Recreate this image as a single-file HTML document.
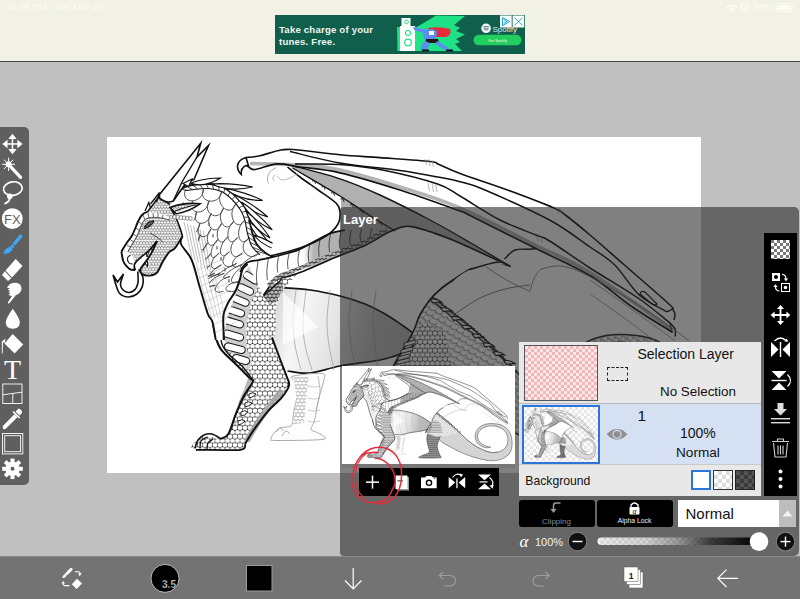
<!DOCTYPE html>
<html><head><meta charset="utf-8">
<style>
*{margin:0;padding:0;box-sizing:border-box}
html,body{width:800px;height:599px;overflow:hidden;background:#c0c0c0;font-family:"Liberation Sans",sans-serif}
.abs{position:absolute}
#top{left:0;top:0;width:800px;height:61px;background:#f2f1e6}
#topline{left:0;top:61px;width:800px;height:1px;background:#454545}
#canvas{left:107px;top:137px;width:594px;height:336px;background:#fff;overflow:hidden}
#ltb{left:0;top:127px;width:29px;height:358px;background:#5f5f5f;border-radius:0 5px 5px 0}
#panel{left:340px;top:207px;width:459px;height:349px;background:rgba(36,36,36,0.58);border-radius:4px 5px 5px 4px}
#btb{left:0;top:556px;width:800px;height:43px;background:#737373}
.st{color:#fdfdf8;font-size:11px;top:3px;letter-spacing:0.2px}
#ad{left:275px;top:15px;width:250px;height:39px;background:#0f5f4c;overflow:hidden}
#adtxt{left:4px;top:9.3px;color:#f3f6f2;font-weight:bold;font-size:9.6px;line-height:11.4px;letter-spacing:0.2px}
#layertitle{left:343px;top:212px;color:#fff;font-weight:bold;font-size:13px}
#thumb{left:342px;top:366px;width:173px;height:98px;background:#fff;overflow:hidden}
#thumbstrip{left:342px;top:464px;width:173px;height:4px;background:#777}
#ttb{left:358.5px;top:468px;width:140.5px;height:27.5px;background:#000}
#llist{left:519px;top:342px;width:242px;height:154px;background:#e8e8e8}
#rtb{left:764px;top:233px;width:33px;height:263px;background:#000}
.t{color:#111;white-space:nowrap}
</style></head>
<body>
<div id="top" class="abs"></div>
<div id="topline" class="abs"></div>
<svg class="abs" style="left:0;top:0" width="800" height="20">
  <g fill="#fcfcf6" stroke="none">
    <text x="5.2" y="10" font-family="Liberation Sans" font-size="9.3" fill="#fcfcf6" textLength="41.3" lengthAdjust="spacingAndGlyphs">12:29 PM</text>
    <text x="55.5" y="10" font-family="Liberation Sans" font-size="9.3" fill="#fcfcf6" textLength="48" lengthAdjust="spacingAndGlyphs">Sat Mar 28</text>
    <text x="753.8" y="10.2" font-family="Liberation Sans" font-size="9.3" fill="#fcfcf6" textLength="19.3" lengthAdjust="spacingAndGlyphs">90%</text>
    <path d="M726 7.2 A 8 8 0 0 1 737.6 7.2 L736.3 8.6 A 6 6 0 0 0 727.3 8.6Z"/>
    <path d="M728.3 9.5 A 5 5 0 0 1 735.3 9.5 L734 10.9 A 3 3 0 0 0 729.6 10.9Z"/>
    <path d="M730.5 11.8 A 2 2 0 0 1 733.1 11.8 L731.8 13.3Z"/>
    <circle cx="745" cy="7.5" r="4" fill="none" stroke="#fcfcf6" stroke-width="1.6"/>
    <path d="M743 7.5 L747.5 5.5 L745.5 10Z"/>
    <rect x="776" y="3.5" width="16" height="8" rx="2" fill="none" stroke="#fcfcf6" stroke-width="0.8"/>
    <rect x="777.5" y="5" width="13" height="5" rx="1"/>
    <rect x="792.5" y="6" width="1" height="3"/>
  </g>
</svg>
<div id="ad" class="abs">
  <div id="adtxt" class="abs">Take charge of your<br>tunes. Free.</div>
  <svg class="abs" style="left:0;top:0" width="250" height="39" viewBox="275 15 250 39">
    <path d="M397 27 L417 27 L436 15.5 L465 16 L454 25 L460 28 L456 31 L465 34.5 L456 39 L460 42 L455 44 L462 51 L397.5 51Z" fill="#1ee285"/>
    <rect x="401.5" y="18" width="9" height="9" fill="#fff"/>
    <rect x="400" y="26" width="15" height="25" fill="#fff"/>
    <circle cx="406.5" cy="22" r="1.8" fill="none" stroke="#1ee285" stroke-width="1"/>
    <circle cx="408" cy="33" r="2.5" fill="none" stroke="#1ee285" stroke-width="1.1"/>
    <circle cx="408" cy="42.5" r="3.3" fill="none" stroke="#1ee285" stroke-width="1.2"/>
    <path d="M428 28 Q440 26 450 29 Q452 35 446 37 L432 37Z" fill="#e8293a"/>
    <path d="M413 27 L425 29.5 L432 29 L437 31 L436 39 L424 39 L423 33 L414 30Z" fill="#5b8ef0"/>
    <rect x="429" y="31" width="5" height="4" fill="#fff"/>
    <path d="M426 39 L438 39 L439 43 L425 43Z" fill="#1a1a1a"/>
    <path d="M425 41 L430 43 L427 50 L421 50 Q420 45 425 41Z" fill="#5b8ef0"/>
    <path d="M437 41 L446 46 L451 50 L445 50 L435 44Z" fill="#5b8ef0"/>
    <rect x="422" y="49.5" width="7" height="1.8" fill="#111"/>
    <rect x="446" y="49.5" width="7" height="1.8" fill="#111"/>
    <circle cx="486.1" cy="28.3" r="4.8" fill="#f4f4f4"/>
    <path d="M483.3 26.8 Q486.3 25.8 489 27 M483.6 28.4 Q486.3 27.6 488.6 28.6 M484 29.9 Q486.2 29.3 488.1 30.1" stroke="#0f5f4c" stroke-width="0.7" fill="none"/>
    <text x="492.5" y="31.5" font-family="Liberation Sans" font-size="8" fill="#e6e6e6">Spotify</text>
    <rect x="473.5" y="34.8" width="48" height="10.5" rx="5.25" fill="#22cf5e"/>
    <text x="497.5" y="42" font-family="Liberation Sans" font-size="3.8" fill="#e8f8ea" text-anchor="middle">Get Spotify</text>
    <rect x="500" y="15.5" width="11.7" height="12" fill="#fff"/>
    <path d="M502.5 17.5 L509.5 21.5 L502.5 25.8Z M503.8 19.6 L507 21.5 L503.8 23.5" fill="none" stroke="#1ba3d6" stroke-width="1"/>
    <rect x="512.6" y="15.5" width="11.6" height="12" fill="#fff"/>
    <path d="M514.5 17.7 L522.3 25.3 M522.3 17.7 L514.5 25.3" stroke="#1ba3d6" stroke-width="0.9"/>
  </svg>
</div>

<div id="canvas" class="abs"></div>
<svg class="abs" style="left:107px;top:137px" width="594" height="336" viewBox="107 137 594 336">
<defs>
<g id="dragon">
<defs>
 <pattern id="scl" width="3" height="2.7" patternUnits="userSpaceOnUse">
  <rect width="3" height="2.7" fill="#fff"/>
  <circle cx="1.5" cy="1.35" r="1.15" fill="none" stroke="#888" stroke-width="0.45"/>
 </pattern>
 <pattern id="sclB" width="5" height="8.6" patternUnits="userSpaceOnUse">
  <rect width="5" height="8.6" fill="#3c3c3c"/>
  <ellipse cx="2.5" cy="2.15" rx="2.4" ry="2.12" fill="#fff"/>
  <ellipse cx="0" cy="6.45" rx="2.4" ry="2.12" fill="#fff"/>
  <ellipse cx="5" cy="6.45" rx="2.4" ry="2.12" fill="#fff"/>
 </pattern>
 <pattern id="sclL" width="4" height="7" patternUnits="userSpaceOnUse">
  <rect width="4" height="7" fill="#bbb"/>
  <ellipse cx="2" cy="1.75" rx="1.7" ry="1.45" fill="#fff"/>
  <ellipse cx="0" cy="5.25" rx="1.7" ry="1.45" fill="#fff"/>
  <ellipse cx="4" cy="5.25" rx="1.7" ry="1.45" fill="#fff"/>
 </pattern>
 <pattern id="sclD" width="4" height="7" patternUnits="userSpaceOnUse">
  <rect width="4" height="7" fill="#3a3a3a"/>
  <ellipse cx="2" cy="1.75" rx="1.75" ry="1.5" fill="#b8b8b8"/>
  <ellipse cx="0" cy="5.25" rx="1.75" ry="1.5" fill="#b8b8b8"/>
  <ellipse cx="4" cy="5.25" rx="1.75" ry="1.5" fill="#b8b8b8"/>
 </pattern>
 <pattern id="sclH" width="7" height="6" patternUnits="userSpaceOnUse" patternTransform="rotate(30)">
  <rect width="7" height="6" fill="#fff"/>
  <path d="M0,3 Q3.5,7 7,3" fill="none" stroke="#555" stroke-width="0.8"/>
  <path d="M0,0 L0,6" stroke="#666" stroke-width="0.6"/>
 </pattern>
 <pattern id="sclHd" width="3" height="5.2" patternUnits="userSpaceOnUse">
  <rect width="3" height="5.2" fill="#7c7c7c"/>
  <ellipse cx="1.5" cy="1.3" rx="1.32" ry="1.18" fill="#fff"/>
  <ellipse cx="0" cy="3.9" rx="1.32" ry="1.18" fill="#fff"/>
  <ellipse cx="3" cy="3.9" rx="1.32" ry="1.18" fill="#fff"/>
 </pattern>
 <pattern id="sclT" width="5" height="5" patternUnits="userSpaceOnUse" patternTransform="rotate(35)">
  <rect width="5" height="5" fill="#f4f4f4"/>
  <path d="M0,2.5 Q2.5,5 5,2.5" fill="none" stroke="#555" stroke-width="0.7"/>
  <path d="M2.5,0 L2.5,5" stroke="#777" stroke-width="0.5"/>
 </pattern>
 <linearGradient id="humg" x1="253" y1="0" x2="405" y2="0" gradientUnits="userSpaceOnUse">
  <stop offset="0" stop-color="#fff"/><stop offset="0.33" stop-color="#fff"/><stop offset="0.4" stop-color="#b4b4b4"/><stop offset="1" stop-color="#a4a4a4"/>
 </linearGradient>
 <linearGradient id="belly" x1="272" y1="300" x2="420" y2="340" gradientUnits="userSpaceOnUse">
  <stop offset="0" stop-color="#d4d4d4"/><stop offset="0.2" stop-color="#f6f6f6"/><stop offset="0.45" stop-color="#e4e4e4"/><stop offset="0.7" stop-color="#bdbdbd"/><stop offset="1" stop-color="#b0b0b0"/>
 </linearGradient>
</defs>
<path d="M428.9,294.3 C437.4,301.0 464.2,320.8 479.7,334.5 C495.2,348.2 507.9,364.1 522.0,376.8 C536.1,389.5 549.5,401.5 564.3,410.7 C579.1,419.9 597.4,428.3 610.8,431.8 C624.2,435.3 634.7,434.6 644.6,431.8 C654.5,429.0 664.7,422.6 670.0,414.9 C675.3,407.1 677.1,394.5 676.4,385.3 C675.7,376.1 671.8,366.6 665.8,359.9 C659.8,353.2 649.6,347.9 640.4,345.1 C631.2,342.3 620.0,341.6 610.8,343.0 C601.6,344.4 591.8,348.7 585.4,353.6 C579.0,358.5 574.1,365.9 572.7,372.6 C571.3,379.3 573.5,387.7 577.0,393.7 C580.5,399.7 587.6,405.0 593.9,408.5 C600.2,412.0 611.5,413.8 615.0,414.9 L617.2,415.7 C614.0,415.9 605.5,419.2 598.1,417.0 C590.7,414.8 578.3,408.9 572.7,402.2 C567.1,395.5 564.3,384.9 564.3,376.8 C564.3,368.7 567.8,360.0 572.7,353.6 C577.6,347.2 585.4,341.9 593.9,338.7 C602.4,335.5 612.9,334.1 623.5,334.5 C634.1,334.9 647.4,336.0 657.3,340.9 C667.2,345.8 677.1,353.9 682.7,364.1 C688.4,374.3 691.2,390.2 691.2,402.2 C691.2,414.2 689.1,426.8 682.7,436.0 C676.4,445.2 665.1,453.0 653.1,457.2 C641.1,461.4 629.1,463.5 610.8,461.4 C592.5,459.3 565.0,452.2 543.1,444.5 C521.2,436.8 497.3,424.8 479.7,414.9 C462.1,405.0 448.0,400.8 437.4,385.3 C426.8,369.8 419.7,332.4 416.2,321.8Z" fill="url(#sclT)" stroke="#222" stroke-width="1.5" />
<path d="M428.9,294.3 C437.4,301.0 464.2,320.8 479.7,334.5 C495.2,348.2 507.9,364.1 522.0,376.8 C536.1,389.5 549.5,401.5 564.3,410.7 C579.1,419.9 597.4,428.3 610.8,431.8 C624.2,435.3 639.0,431.8 644.6,431.8" fill="none" stroke="#333" stroke-width="2.6" stroke-dasharray="1.5 2.5"/>
<path d="M418.0,330.0 C409.5,331.7 407.3,350.8 404.0,360.0 C400.7,369.2 398.3,376.7 398.0,385.0 C397.7,393.3 400.5,402.5 402.0,410.0 C403.5,417.5 407.7,425.3 407.0,430.0 C406.3,434.7 402.2,435.7 398.0,438.0 C393.8,440.3 386.0,441.7 382.0,444.0 C378.0,446.3 364.0,450.7 374.0,452.0 C384.0,453.3 430.3,453.3 442.0,452.0 C453.7,450.7 444.7,447.7 444.0,444.0 C443.3,440.3 439.7,435.7 438.0,430.0 C436.3,424.3 433.3,417.5 434.0,410.0 C434.7,402.5 438.5,395.0 442.0,385.0 C445.5,375.0 459.0,359.2 455.0,350.0 C451.0,340.8 426.5,328.3 418.0,330.0Z" fill="url(#sclD)" stroke="#222" stroke-width="1.5" />
<path d="M393.5,365.8 L412.8,332.5 L419.8,315.0 L430.2,299.2 L458.0,322.0 L487.0,345.0 L510.0,366.0 L470.0,375.0 L430.0,380.0Z" fill="url(#sclH)" stroke="none" stroke-width="0" />
<path d="M400.0,366.0 L413.0,332.0 L425.0,322.0 L445.0,333.0 L452.0,366.0Z" fill="url(#sclB)" stroke="none" stroke-width="0" />
<path d="M401.0,340.0 l12,-3 q2,1.5 0,3.5 l-12,3Z" fill="#eee" stroke="#222" stroke-width="0.9" />
<path d="M399.0,347.0 l12,-3 q2,1.5 0,3.5 l-12,3Z" fill="#eee" stroke="#222" stroke-width="0.9" />
<path d="M398.0,354.0 l12,-3 q2,1.5 0,3.5 l-12,3Z" fill="#eee" stroke="#222" stroke-width="0.9" />
<path d="M397.0,361.0 l12,-3 q2,1.5 0,3.5 l-12,3Z" fill="#eee" stroke="#222" stroke-width="0.9" />
<path d="M393.5,365.8 C396.7,360.2 408.4,341.0 412.8,332.5 C417.1,324.0 416.8,320.5 419.8,315.0 C422.7,309.5 426.8,303.6 430.2,299.2 C433.8,294.9 437.0,292.0 440.8,288.8 C444.5,285.5 448.5,283.1 453.0,280.0 C457.5,276.9 460.6,272.8 467.5,270.0 C474.4,267.2 487.4,263.9 494.5,263.2 C501.6,262.6 507.4,265.5 510.0,266.0" fill="none" stroke="#111" stroke-width="1.6" />
<path d="M430.2,299.2 L458.0,322.0 L487.8,345.0 L506.0,362.0" fill="none" stroke="#222" stroke-width="1.2" />
<path d="M430.2,299.2 Q436.2,297.8 441.8,302.1 Q436.2,301.8 432.8,302.8 Z" fill="#fff" stroke="#111" stroke-width="1.1" />
<path d="M440.8,308.1 Q446.8,306.6 452.2,310.9 Q446.8,310.6 443.2,311.6 Z" fill="#fff" stroke="#111" stroke-width="1.1" />
<path d="M451.2,316.9 Q457.2,315.4 462.8,319.7 Q457.2,319.4 453.8,320.4 Z" fill="#fff" stroke="#111" stroke-width="1.1" />
<path d="M461.8,325.6 Q467.8,324.1 473.2,328.4 Q467.8,328.1 464.2,329.1 Z" fill="#fff" stroke="#111" stroke-width="1.1" />
<path d="M472.2,334.4 Q478.2,332.9 483.8,337.2 Q478.2,336.9 474.8,337.9 Z" fill="#fff" stroke="#111" stroke-width="1.1" />
<path d="M482.8,343.2 Q488.8,341.8 494.2,346.1 Q488.8,345.8 485.2,346.8 Z" fill="#fff" stroke="#111" stroke-width="1.1" />
<path d="M493.2,352.1 Q499.2,350.6 504.8,354.9 Q499.2,354.6 495.8,355.6 Z" fill="#fff" stroke="#111" stroke-width="1.1" />
<path d="M503.8,360.9 Q509.8,359.4 515.2,363.7 Q509.8,363.4 506.2,364.4 Z" fill="#fff" stroke="#111" stroke-width="1.1" />
<path d="M456.5,313.0 C460.4,310.5 471.9,302.0 480.0,298.0 C488.1,294.0 496.7,291.2 505.0,289.0 C513.3,286.8 525.8,285.7 530.0,285.0" fill="none" stroke="#555" stroke-width="0.8" />
<path d="M270.0,254.0 L330.0,232.0 L398.6,227.0 L430.0,231.0 L509.0,264.0 L470.0,268.0 L452.6,279.0 L432.0,297.0 L420.0,315.0 L414.3,335.0 L385.0,312.6 L340.0,295.0 L280.0,287.5Z" fill="#fff" stroke="none" stroke-width="0" />
<path d="M280.0,287.5 C285.0,287.9 300.0,288.6 310.0,290.0 C320.0,291.4 330.8,293.7 340.0,296.0 C349.2,298.3 357.5,301.0 365.0,304.0 C372.5,307.0 378.8,310.5 385.0,314.0 C391.2,317.5 397.3,321.8 402.0,325.0 C406.7,328.2 411.2,331.7 413.0,333.0 L400.0,356.0 C398.3,356.3 395.0,357.2 390.0,358.0 C385.0,358.8 378.3,359.7 370.0,361.0 C361.7,362.3 350.0,364.0 340.0,366.0 C330.0,368.0 318.8,372.2 310.0,373.0 C301.2,373.8 291.2,371.3 287.5,371.0 C278,355 272,335 272.5,325 C272,310 275,295 280,287.5Z" fill="url(#belly)" stroke="none" stroke-width="0" />
<path d="M280.0,287.5 C285.0,287.9 300.0,288.6 310.0,290.0 C320.0,291.4 330.8,293.7 340.0,296.0 C349.2,298.3 357.5,301.0 365.0,304.0 C372.5,307.0 378.8,310.5 385.0,314.0 C391.2,317.5 397.3,321.8 402.0,325.0 C406.7,328.2 411.2,331.7 413.0,333.0" fill="none" stroke="#111" stroke-width="1.7" />
<path d="M287.5,371.0 C291.2,371.3 301.2,373.8 310.0,373.0 C318.8,372.2 328.3,368.2 340.0,366.0 C351.7,363.8 370.0,362.0 380.0,360.0 C390.0,358.0 394.3,356.5 400.0,354.0 C405.7,351.5 411.9,346.5 414.3,345.0" fill="none" stroke="#111" stroke-width="1.7" />
<path d="M393.5,365.8 C396.7,360.2 408.4,341.0 412.8,332.5 C417.1,324.0 416.8,320.5 419.8,315.0 C422.7,309.5 426.8,303.6 430.2,299.2 C433.8,294.9 437.0,292.0 440.8,288.8 C444.5,285.5 451.0,281.5 453.0,280.0" fill="none" stroke="#111" stroke-width="1.6" />
<path d="M404.0,343.0 l11,-3 q2,1.5 0,3.5 l-11,3Z" fill="#eee" stroke="#222" stroke-width="0.9" />
<path d="M401.0,350.0 l11,-3 q2,1.5 0,3.5 l-11,3Z" fill="#eee" stroke="#222" stroke-width="0.9" />
<path d="M398.0,357.0 l11,-3 q2,1.5 0,3.5 l-11,3Z" fill="#eee" stroke="#222" stroke-width="0.9" />
<path d="M296.0,290.0 C295.5,295.0 293.2,310.8 293.0,320.0 C292.8,329.2 293.7,336.7 295.0,345.0 C296.3,353.3 300.0,365.8 301.0,370.0" fill="none" stroke="#999" stroke-width="0.7" />
<path d="M306.0,290.0 C305.5,295.0 303.2,310.8 303.0,320.0 C302.8,329.2 303.5,336.7 305.0,345.0 C306.5,353.3 310.8,365.8 312.0,370.0" fill="none" stroke="#999" stroke-width="0.7" />
<path d="M330.0,290.0 C329.5,295.0 327.2,310.8 327.0,320.0 C326.8,329.2 327.8,336.7 329.0,345.0 C330.2,353.3 333.2,365.8 334.0,370.0" fill="none" stroke="#999" stroke-width="0.7" />
<path d="M352.0,290.0 C351.5,295.0 349.2,310.8 349.0,320.0 C348.8,329.2 349.8,336.7 351.0,345.0 C352.2,353.3 355.2,365.8 356.0,370.0" fill="none" stroke="#999" stroke-width="0.7" />
<path d="M376.0,290.0 C375.5,295.0 373.2,310.8 373.0,320.0 C372.8,329.2 374.2,336.7 375.0,345.0 C375.8,353.3 377.5,365.8 378.0,370.0" fill="none" stroke="#999" stroke-width="0.7" />
<path d="M283.0,292.0 L318.0,327.0 L283.0,345.0Z" fill="#fff" stroke="none" stroke-width="0" opacity="0.7"/>
<path d="M292.0,376.5 C288.0,378.2 297.2,380.2 298.0,384.0 C298.8,387.8 297.3,394.2 296.6,399.0 C295.9,403.8 294.4,408.3 293.6,412.6 C292.8,416.9 293.3,422.3 292.0,424.7 C290.7,427.1 288.0,426.4 286.0,427.0 C284.0,427.6 282.0,427.0 280.0,428.0 C278.0,429.0 275.5,431.2 274.0,433.0 C272.5,434.8 270.7,437.8 271.0,439.0 C271.3,440.2 267.5,440.4 276.0,440.5 C284.5,440.6 314.3,440.4 322.0,439.5 C329.7,438.6 323.0,436.2 322.0,435.0 C321.0,433.8 317.8,433.0 316.0,432.0 C314.2,431.0 311.2,431.0 311.0,429.0 C310.8,427.0 313.3,425.2 314.6,420.0 C315.9,414.8 317.5,404.1 319.0,397.6 C320.5,391.1 323.1,385.0 323.6,381.0 C324.1,377.0 327.3,374.2 322.0,373.5 C316.7,372.8 296.0,374.8 292.0,376.5Z" fill="#fdfdfd" stroke="#a0a0a0" stroke-width="0.9" />
<path d="M293.5,377.0 L308.6,377.0 L306.0,400.0 L304.0,423.0 L293.0,424.0 L296.6,399.0Z" fill="url(#sclL)" stroke="none" stroke-width="0" />
<path d="M308.0,386.0 C309.0,386.2 312.0,387.0 314.0,387.0 C316.0,387.0 319.0,386.2 320.0,386.0" fill="none" stroke="#bbb" stroke-width="0.8" />
<path d="M308.0,398.0 C309.0,398.2 312.0,399.0 314.0,399.0 C316.0,399.0 319.0,398.2 320.0,398.0" fill="none" stroke="#bbb" stroke-width="0.8" />
<path d="M308.0,410.0 C309.0,410.2 312.0,411.0 314.0,411.0 C316.0,411.0 319.0,410.2 320.0,410.0" fill="none" stroke="#bbb" stroke-width="0.8" />
<path d="M308.0,421.0 C309.0,421.2 312.0,422.0 314.0,422.0 C316.0,422.0 319.0,421.2 320.0,421.0" fill="none" stroke="#bbb" stroke-width="0.8" />
<path d="M318.0,376.0 C318.3,378.7 320.3,386.3 320.0,392.0 C319.7,397.7 316.7,407.0 316.0,410.0" fill="none" stroke="#aaa" stroke-width="0.8" />
<path d="M276.0,432.0 C276.7,431.3 278.7,428.2 280.0,428.0 C281.3,427.8 283.3,430.5 284.0,431.0" fill="none" stroke="#999" stroke-width="0.8" />
<path d="M282.0,436.0 C282.7,435.2 284.7,431.3 286.0,431.0 C287.3,430.7 289.3,433.5 290.0,434.0" fill="none" stroke="#999" stroke-width="0.8" />
<path d="M252.0,261.0 C241.7,264.2 245.0,265.5 243.0,268.5 C241.0,271.5 241.2,275.2 240.0,279.0 C238.8,282.8 237.5,287.0 235.5,291.0 C233.5,295.0 230.0,299.0 228.0,303.0 C226.0,307.0 224.2,310.5 223.5,315.0 C222.8,319.5 223.4,325.8 223.5,330.0 C223.6,334.2 223.4,336.7 223.8,340.0 C224.2,343.3 224.0,346.0 226.0,350.0 C228.0,354.0 231.6,359.2 235.6,363.9 C239.6,368.6 247.2,375.4 250.0,378.4 C252.8,381.4 253.8,378.8 252.6,382.0 C251.4,385.2 245.8,392.2 243.0,397.7 C240.2,403.1 238.0,408.6 235.6,414.7 C233.2,420.8 230.8,430.0 228.4,434.0 C226.0,438.0 224.9,438.6 221.0,438.9 C217.1,439.2 209.2,435.6 205.0,436.0 C200.8,436.4 197.8,438.7 196.0,441.0 C194.2,443.3 186.6,448.5 194.0,450.0 C201.4,451.5 231.9,450.9 240.5,449.8 C249.1,448.8 243.3,446.7 245.3,443.7 C247.3,440.7 249.0,436.8 252.6,431.6 C256.2,426.4 262.2,418.0 267.0,412.3 C271.8,406.6 277.9,402.1 281.6,397.7 C285.3,393.2 288.2,389.2 289.0,385.6 C289.8,382.0 288.0,380.4 286.5,376.0 C285.0,371.6 282.1,364.3 280.0,359.0 C277.9,353.7 274.7,349.7 274.0,344.0 C273.3,338.3 275.7,331.1 276.0,325.0 C276.3,318.9 274.7,313.4 276.0,307.5 C277.3,301.6 279.6,295.8 283.6,289.5 C287.6,283.2 296.4,276.7 300.0,270.0 C303.6,263.3 313.0,251.0 305.0,249.5 C297.0,248.0 262.3,257.8 252.0,261.0Z" fill="url(#sclB)" stroke="none" stroke-width="0" />
<path d="M263.0,296.0 L272.0,285.0 L282.0,281.0 L283.0,288.0 L277.0,300.0 L270.0,305.0Z" fill="url(#sclD)" stroke="none" stroke-width="0" />
<path d="M252.0,261.0 L243.0,268.5 L240.0,279.0 L235.5,291.0 L228.0,303.0 L223.5,315.0 L223.5,330.0 L226.0,345.0 L235.0,357.0 L248.0,370.0 L252.0,364.0 L247.0,350.0 L246.0,330.0 L248.0,315.0 L252.0,300.0 L258.0,285.0 L262.0,270.0Z" fill="#cfcfcf" stroke="none" stroke-width="0" />
<path d="M-5.0,-3.6 h10.0 a3.6,3.6 0 0 1 0,7.2 h-10.0 a3.6,3.6 0 0 1 0,-7.2Z" fill="#fff" stroke="#1a1a1a" stroke-width="1.05" transform="translate(251.0 277.8) rotate(32.0)"/>
<path d="M-5.1,-3.6 h10.1 a3.6,3.6 0 0 1 0,7.2 h-10.1 a3.6,3.6 0 0 1 0,-7.2Z" fill="#fff" stroke="#1a1a1a" stroke-width="1.05" transform="translate(245.5 289.5) rotate(24.8)"/>
<path d="M-5.7,-3.6 h11.5 a3.6,3.6 0 0 1 0,7.2 h-11.5 a3.6,3.6 0 0 1 0,-7.2Z" fill="#fff" stroke="#1a1a1a" stroke-width="1.05" transform="translate(240.2 300.5) rotate(22.5)"/>
<path d="M-5.8,-3.6 h11.6 a3.6,3.6 0 0 1 0,7.2 h-11.6 a3.6,3.6 0 0 1 0,-7.2Z" fill="#fff" stroke="#1a1a1a" stroke-width="1.05" transform="translate(235.5 311.5) rotate(18.4)"/>
<path d="M-6.8,-3.6 h13.5 a3.6,3.6 0 0 1 0,7.2 h-13.5 a3.6,3.6 0 0 1 0,-7.2Z" fill="#fff" stroke="#1a1a1a" stroke-width="1.05" transform="translate(233.5 322.5) rotate(16.4)"/>
<path d="M-7.0,-3.6 h14.0 a3.6,3.6 0 0 1 0,7.2 h-14.0 a3.6,3.6 0 0 1 0,-7.2Z" fill="#fff" stroke="#1a1a1a" stroke-width="1.05" transform="translate(233.2 335.5) rotate(15.9)"/>
<path d="M-6.9,-3.6 h13.9 a3.6,3.6 0 0 1 0,7.2 h-13.9 a3.6,3.6 0 0 1 0,-7.2Z" fill="#fff" stroke="#1a1a1a" stroke-width="1.05" transform="translate(234.8 348.2) rotate(14.4)"/>
<path d="M-5.2,-3.6 h10.4 a3.6,3.6 0 0 1 0,7.2 h-10.4 a3.6,3.6 0 0 1 0,-7.2Z" fill="#fff" stroke="#1a1a1a" stroke-width="1.05" transform="translate(241.0 359.5) rotate(15.9)"/>
<path d="M250.0,379.0 C249.3,380.8 247.7,385.8 246.0,390.0 C244.3,394.2 241.0,401.7 240.0,404.0" fill="none" stroke="#999" stroke-width="4" opacity="0.7"/>
<path d="M282.0,390.0 C280.3,392.2 275.5,398.3 272.0,403.0 C268.5,407.7 264.3,413.2 261.0,418.0 C257.7,422.8 254.3,428.2 252.0,432.0 C249.7,435.8 247.8,439.5 247.0,441.0" fill="none" stroke="#a4a4a4" stroke-width="6" opacity="0.85"/>
<path d="M249.0,394.0 q4,-2.5 7,0 q-3,3.5 -7,4Z" fill="#fff" stroke="#222" stroke-width="1.0" />
<path d="M245.0,403.0 q4,-2.5 7,0 q-3,3.5 -7,4Z" fill="#fff" stroke="#222" stroke-width="1.0" />
<path d="M241.0,412.0 q4,-2.5 7,0 q-3,3.5 -7,4Z" fill="#fff" stroke="#222" stroke-width="1.0" />
<path d="M238.0,421.0 q4,-2.5 7,0 q-3,3.5 -7,4Z" fill="#fff" stroke="#222" stroke-width="1.0" />
<path d="M252.0,261.0 C250.5,262.2 245.0,265.5 243.0,268.5 C241.0,271.5 241.2,275.2 240.0,279.0 C238.8,282.8 237.5,287.0 235.5,291.0 C233.5,295.0 230.0,299.0 228.0,303.0 C226.0,307.0 224.2,310.5 223.5,315.0 C222.8,319.5 223.4,325.8 223.5,330.0 C223.6,334.2 223.8,338.3 223.8,340.0" fill="none" stroke="#111" stroke-width="2" />
<path d="M212.5,320.0 C213.0,322.8 214.1,331.6 215.5,336.5 C216.9,341.4 217.7,344.8 221.0,349.4 C224.3,354.0 230.8,359.1 235.6,363.9 C240.4,368.7 247.2,375.4 250.0,378.4 C252.8,381.4 253.8,378.8 252.6,382.0 C251.4,385.2 245.8,392.2 243.0,397.7 C240.2,403.1 238.0,408.6 235.6,414.7 C233.2,420.8 230.8,430.0 228.4,434.0 C226.0,438.0 222.2,438.1 221.0,438.9" fill="none" stroke="#111" stroke-width="2.1" />
<path d="M221.5,322.0 C221.5,325.4 220.2,337.1 221.5,342.5 C222.8,347.9 225.5,350.5 229.0,354.5 C232.5,358.5 238.5,362.2 242.5,366.5 C246.5,370.8 251.2,377.8 253.0,380.0" fill="none" stroke="#111" stroke-width="1.3" />
<path d="M282.0,279.0 C279.0,281.8 267.0,292.8 264.0,295.5" fill="none" stroke="#111" stroke-width="1.3" />
<path d="M272.0,337.3 C273.3,340.9 277.6,352.6 280.0,359.0 C282.4,365.4 285.0,371.6 286.5,376.0 C288.0,380.4 289.8,382.0 289.0,385.6 C288.2,389.2 285.3,393.2 281.6,397.7 C277.9,402.1 271.8,406.6 267.0,412.3 C262.2,418.0 256.2,426.4 252.6,431.6 C249.0,436.8 246.5,441.7 245.3,443.7" fill="none" stroke="#111" stroke-width="2" />
<path d="M221.0,438.9 C219.5,438.1 214.8,434.6 212.0,434.0 C209.2,433.4 206.3,434.0 204.0,435.0 C201.7,436.0 199.5,437.8 198.0,440.0 C196.5,442.2 195.5,446.7 195.0,448.0" fill="none" stroke="#111" stroke-width="1.6" />
<path d="M207.0,437.0 C206.0,437.7 202.2,439.2 201.0,441.0 C199.8,442.8 200.2,446.8 200.0,448.0" fill="none" stroke="#111" stroke-width="1.3" />
<path d="M213.0,439.0 C212.2,439.7 209.0,441.3 208.0,443.0 C207.0,444.7 207.2,448.0 207.0,449.0" fill="none" stroke="#111" stroke-width="1.3" />
<path d="M196.0,450.0 C197.3,450.0 196.6,449.8 204.0,449.8 C211.4,449.8 233.6,450.8 240.5,449.8 C247.4,448.8 244.5,444.7 245.3,443.7" fill="none" stroke="#111" stroke-width="1.8" />
<path d="M178.0,190.7 L189.0,185.5 L208.5,184.0 L223.5,187.0 L235.5,196.0 L244.5,206.5 L249.0,217.0 L252.0,232.0 L256.6,244.0 L265.6,253.0 L276.0,257.6 L286.0,256.0 L305.0,249.5 L253.0,260.0 L242.5,276.0 L234.5,297.5 L226.5,319.0 L223.8,340.0 L215.8,340.0 L212.5,320.0 L207.7,313.6 L199.7,287.0 L191.7,260.0 L181.0,244.0 L182.5,236.3 L176.0,214.0 L171.0,209.0Z" fill="#fff" stroke="none" stroke-width="0" />
<clipPath id="neckclip"><path d="M176.0,192.0 L185.0,189.5 L208.5,187.5 L222.5,190.5 L233.5,199.0 L241.5,209.0 L245.8,219.0 L248.5,233.0 L253.0,245.5 L261.0,254.0 L252.0,261.0 L243.0,268.5 L240.0,279.0 L235.5,291.0 L228.0,303.0 L223.5,315.0 L217.5,303.0 L210.0,289.5 L205.5,259.5 L198.0,240.0 L191.7,212.0 L178.0,204.0Z"/></clipPath>
<path d="M184.0,222.0 C184.7,225.0 186.7,234.0 188.0,240.0 C189.3,246.0 191.3,255.0 192.0,258.0" fill="none" stroke="#999" stroke-width="0.7" />
<path d="M187.2,223.5 C187.9,226.6 189.9,235.8 191.2,242.0 C192.5,248.2 194.5,257.4 195.2,260.5" fill="none" stroke="#999" stroke-width="0.7" />
<path d="M190.4,225.0 C191.1,228.2 193.1,237.7 194.4,244.0 C195.7,250.3 197.7,259.8 198.4,263.0" fill="none" stroke="#999" stroke-width="0.7" />
<path d="M193.6,226.5 C194.3,229.8 196.3,239.5 197.6,246.0 C198.9,252.5 200.9,262.2 201.6,265.5" fill="none" stroke="#999" stroke-width="0.7" />
<path d="M196.8,228.0 C197.5,231.3 199.5,241.3 200.8,248.0 C202.1,254.7 204.1,264.7 204.8,268.0" fill="none" stroke="#999" stroke-width="0.7" />
<path d="M200.0,229.5 C200.7,232.9 202.7,243.2 204.0,250.0 C205.3,256.8 207.3,267.1 208.0,270.5" fill="none" stroke="#999" stroke-width="0.7" />
<path d="M203.2,231.0 C203.9,234.5 205.9,245.0 207.2,252.0 C208.5,259.0 210.5,269.5 211.2,273.0" fill="none" stroke="#999" stroke-width="0.7" />
<path d="M196.0,262.0 C197.2,266.7 200.3,280.7 203.0,290.0 C205.7,299.3 210.5,313.3 212.0,318.0" fill="none" stroke="#b5b5b5" stroke-width="0.6" />
<path d="M200.5,265.0 C201.7,269.5 205.1,283.2 207.5,292.0 C209.9,300.8 213.8,313.7 215.0,318.0" fill="none" stroke="#b5b5b5" stroke-width="0.6" />
<path d="M205.0,268.0 C206.2,272.3 209.8,285.7 212.0,294.0 C214.2,302.3 217.0,314.0 218.0,318.0" fill="none" stroke="#b5b5b5" stroke-width="0.6" />
<path d="M209.5,271.0 C210.7,275.2 214.6,288.2 216.5,296.0 C218.4,303.8 220.2,314.3 221.0,318.0" fill="none" stroke="#b5b5b5" stroke-width="0.6" />
<path d="M214.0,274.0 C215.2,278.0 219.3,290.7 221.0,298.0 C222.7,305.3 223.5,314.7 224.0,318.0" fill="none" stroke="#b5b5b5" stroke-width="0.6" />
<path d="M197.0,270.0 L226.0,258.0" fill="none" stroke="#bbb" stroke-width="0.6" />
<path d="M199.0,278.0 L227.2,266.0" fill="none" stroke="#bbb" stroke-width="0.6" />
<path d="M201.0,286.0 L228.4,274.0" fill="none" stroke="#bbb" stroke-width="0.6" />
<path d="M203.0,294.0 L229.6,282.0" fill="none" stroke="#bbb" stroke-width="0.6" />
<path d="M205.0,302.0 L230.8,290.0" fill="none" stroke="#bbb" stroke-width="0.6" />
<path d="M207.0,310.0 L232.0,298.0" fill="none" stroke="#bbb" stroke-width="0.6" />
<path d="M209.0,318.0 L233.2,306.0" fill="none" stroke="#bbb" stroke-width="0.6" />
<path d="M211.0,326.0 L234.4,314.0" fill="none" stroke="#bbb" stroke-width="0.6" />
<path d="M213.0,334.0 L235.6,322.0" fill="none" stroke="#bbb" stroke-width="0.6" />
<g clip-path="url(#neckclip)" fill="none" stroke="#4a4a4a" stroke-width="0.95">
<path d="M185.0,190.5 C181.2,205.5 203.5,203.6 203.6,188.9 M203.6,188.9 C197.3,203.0 219.2,206.4 221.8,191.7 M221.8,191.7 C213.7,204.0 230.4,218.6 235.7,204.0 M235.7,204.0 C226.0,214.5 236.9,233.8 244.8,220.0 M244.8,220.0 C233.7,228.7 238.9,250.4 249.1,238.1 M249.1,238.1 C235.8,245.1 247.3,263.7 258.7,253.6 M258.7,253.6 C246.1,258.5 232.0,272.5 246.9,265.3 M246.9,265.3 C233.5,268.7 224.2,288.2 239.1,281.5 M239.1,281.5 C224.6,282.9 220.3,294.3 235.5,291.0 "/>
<path d="M183.5,202.4 C180.7,217.4 191.5,216.1 192.5,201.3 M192.5,201.3 C187.5,216.0 207.4,215.4 209.0,200.9 M209.0,200.9 C201.9,214.0 219.3,222.8 223.5,208.1 M223.5,208.1 C214.7,219.6 226.7,235.4 233.6,221.3 M233.6,221.3 C223.3,230.9 228.1,250.6 237.6,237.6 M237.6,237.6 C225.5,245.6 231.3,264.3 242.4,253.2 M242.4,253.2 C229.2,259.3 229.1,272.7 242.3,264.3 M242.3,264.3 C229.5,268.6 214.8,283.2 230.0,276.5 M230.0,276.5 C216.2,278.9 208.4,296.5 223.5,291.2 "/>
<path d="M182.0,214.3 C178.6,229.4 196.1,226.5 196.5,211.9 M196.5,211.9 C190.7,226.1 208.2,227.7 211.1,213.2 M211.1,213.2 C203.4,225.7 216.0,237.9 221.6,223.4 M221.6,223.4 C212.2,234.2 219.6,250.4 227.7,236.9 M227.7,236.9 C216.9,245.9 218.9,263.9 229.4,251.8 M229.4,251.8 C216.4,259.3 225.2,273.0 236.7,263.3 M236.7,263.3 C224.3,268.4 209.3,280.4 224.3,273.3 M224.3,273.3 C211.0,277.2 200.3,291.4 215.4,285.2 M215.4,285.2 C200.9,286.9 196.3,294.3 211.5,291.4 "/>
<path d="M180.4,226.2 C177.8,241.2 186.0,239.5 187.2,224.8 M187.2,224.8 C182.6,239.6 198.0,237.6 200.0,223.1 M200.0,223.1 C193.3,236.4 206.4,243.0 211.0,228.6 M211.0,228.6 C202.4,240.3 210.6,253.2 217.8,239.4 M217.8,239.4 C207.8,249.3 209.4,265.6 219.1,252.9 M219.1,252.9 C207.3,261.3 210.0,275.6 221.3,264.8 M221.3,264.8 C208.3,271.2 206.7,281.2 219.9,273.1 M219.9,273.1 C207.3,277.7 191.5,289.2 206.8,282.7 M206.8,282.7 C193.1,285.7 184.3,296.3 199.5,291.6 "/>
<path d="M178.9,238.1 C175.9,253.3 188.7,249.4 189.5,234.8 M189.5,234.8 C184.0,249.2 197.1,249.1 200.4,234.7 M200.4,234.7 C193.0,247.4 201.6,257.1 207.5,242.9 M207.5,242.9 C198.4,253.9 202.2,267.0 210.7,253.8 M210.7,253.8 C200.1,263.1 199.0,277.3 209.8,265.6 M209.8,265.6 C197.0,273.4 203.0,282.4 214.8,273.0 M214.8,273.0 C202.4,278.3 186.6,288.3 201.7,281.4 M201.7,281.4 C188.5,285.7 176.5,294.7 191.6,288.9 M191.6,288.9 C177.2,291.0 172.3,294.4 187.5,291.8 "/>
<path d="M177.4,250.0 C175.0,265.1 180.4,262.9 181.9,248.2 M181.9,248.2 C177.7,263.1 188.6,259.7 191.0,245.3 M191.0,245.3 C184.6,258.8 193.5,263.3 198.4,249.0 M198.4,249.0 C190.2,261.0 194.6,271.1 202.1,257.5 M202.1,257.5 C192.4,267.7 190.6,280.7 200.6,268.3 M200.6,268.3 C189.1,277.0 188.7,286.8 200.3,276.4 M200.3,276.4 C187.5,283.1 184.2,289.7 197.6,281.9 M197.6,281.9 C185.1,286.7 168.3,295.1 183.6,288.9 M183.6,288.9 C169.9,292.5 160.2,296.1 175.5,291.9 "/>
<path d="M175.9,261.9 C173.3,277.2 181.2,272.2 182.5,257.8 M182.5,257.8 C177.4,272.3 186.1,270.4 189.8,256.2 M189.8,256.2 C182.7,269.1 187.2,276.3 193.5,262.3 M193.5,262.3 C184.7,273.6 184.8,283.6 193.6,270.6 M193.6,270.6 C183.3,280.3 179.1,290.8 190.1,279.4 M190.1,279.4 C177.5,287.6 180.8,291.7 192.8,282.8 M192.8,282.8 C180.5,288.2 164.0,296.2 179.1,289.5 M179.1,289.5 C166.1,294.2 152.7,298.0 167.9,292.6 M167.9,292.6 C153.6,295.0 148.2,294.4 163.5,292.1 "/>
</g>
<path d="M209.0,222.7 q-1.6,2.2 0,3.4 q1.6,-1.2 0,-3.4Z" fill="none" stroke="#666" stroke-width="0.7" />
<path d="M213.0,234.0 q-1.6,2.2 0,3.4 q1.6,-1.2 0,-3.4Z" fill="none" stroke="#666" stroke-width="0.7" />
<path d="M217.0,246.0 q-1.6,2.2 0,3.4 q1.6,-1.2 0,-3.4Z" fill="none" stroke="#666" stroke-width="0.7" />
<path d="M221.0,257.0 q-1.6,2.2 0,3.4 q1.6,-1.2 0,-3.4Z" fill="none" stroke="#666" stroke-width="0.7" />
<path d="M225.0,268.0 q-1.6,2.2 0,3.4 q1.6,-1.2 0,-3.4Z" fill="none" stroke="#666" stroke-width="0.7" />
<path d="M229.0,279.0 q-1.6,2.2 0,3.4 q1.6,-1.2 0,-3.4Z" fill="none" stroke="#666" stroke-width="0.7" />
<path d="M178.0,190.7 C179.8,189.8 183.9,186.6 189.0,185.5 C194.1,184.4 202.8,183.8 208.5,184.0 C214.2,184.2 219.0,185.0 223.5,187.0 C228.0,189.0 232.0,192.8 235.5,196.0 C239.0,199.2 242.2,203.0 244.5,206.5 C246.8,210.0 247.8,212.8 249.0,217.0 C250.2,221.2 250.7,227.5 252.0,232.0 C253.3,236.5 254.3,240.5 256.6,244.0 C258.9,247.5 262.4,250.7 265.6,253.0 C268.8,255.3 272.6,257.1 276.0,257.6 C279.4,258.1 281.2,257.4 286.0,256.0 C290.8,254.7 301.8,250.6 305.0,249.5" fill="none" stroke="#111" stroke-width="1.9" />
<path d="M185.0,190.5 C188.9,190.2 202.3,188.3 208.5,188.5 C214.7,188.7 218.0,189.9 222.0,191.8 C226.0,193.7 229.4,197.0 232.5,200.0 C235.6,203.0 238.4,206.7 240.5,210.0 C242.6,213.3 243.6,216.1 244.8,220.0 C246.0,223.9 246.3,229.1 247.5,233.5 C248.7,237.9 249.9,242.9 252.0,246.5 C254.1,250.1 258.7,253.6 260.0,255.0" fill="none" stroke="#111" stroke-width="1.1" />
<path d="M180.9,189.3 L187.6,190.3" fill="none" stroke="#333" stroke-width="0.9" />
<path d="M186.8,186.5 L192.9,189.8" fill="none" stroke="#333" stroke-width="0.9" />
<path d="M193.0,185.2 L198.2,189.4" fill="none" stroke="#333" stroke-width="0.9" />
<path d="M199.5,184.7 L203.4,188.9" fill="none" stroke="#333" stroke-width="0.9" />
<path d="M206.0,184.2 L208.7,188.6" fill="none" stroke="#333" stroke-width="0.9" />
<path d="M212.4,184.8 L213.8,189.8" fill="none" stroke="#333" stroke-width="0.9" />
<path d="M218.8,186.1 L219.0,191.1" fill="none" stroke="#333" stroke-width="0.9" />
<path d="M224.8,188.0 L223.7,193.1" fill="none" stroke="#333" stroke-width="0.9" />
<path d="M230.0,191.9 L227.9,196.4" fill="none" stroke="#333" stroke-width="0.9" />
<path d="M235.2,195.8 L232.1,199.7" fill="none" stroke="#333" stroke-width="0.9" />
<path d="M239.5,200.6 L235.4,203.7" fill="none" stroke="#333" stroke-width="0.9" />
<path d="M243.7,205.6 L238.8,207.8" fill="none" stroke="#333" stroke-width="0.9" />
<path d="M246.6,211.3 L241.5,212.3" fill="none" stroke="#333" stroke-width="0.9" />
<path d="M249.1,217.3 L243.6,217.1" fill="none" stroke="#333" stroke-width="0.9" />
<path d="M250.3,223.7 L245.2,222.1" fill="none" stroke="#333" stroke-width="0.9" />
<path d="M251.6,230.1 L246.3,227.3" fill="none" stroke="#333" stroke-width="0.9" />
<path d="M253.6,236.2 L247.3,232.5" fill="none" stroke="#333" stroke-width="0.9" />
<path d="M255.9,242.3 L248.9,237.5" fill="none" stroke="#333" stroke-width="0.9" />
<path d="M259.9,247.3 L250.6,242.5" fill="none" stroke="#333" stroke-width="0.9" />
<path d="M264.5,251.9 L252.8,247.3" fill="none" stroke="#333" stroke-width="0.9" />
<path d="M270.1,255.0 L256.4,251.1" fill="none" stroke="#333" stroke-width="0.9" />
<path d="M190.5,183.3 Q205.2,187.8 220.5,178.0 Q209.6,177.8 196.3,181.3 Z" fill="#fff" stroke="#111" stroke-width="1.15" />
<path d="M211.5,184.0 Q229.6,192.3 252.8,187.0 Q238.5,183.9 219.8,183.6 Z" fill="#fff" stroke="#111" stroke-width="1.15" />
<path d="M225.0,188.5 Q239.8,200.6 262.6,200.5 Q250.1,194.3 232.8,189.9 Z" fill="#fff" stroke="#111" stroke-width="1.15" />
<path d="M234.0,194.5 Q245.3,210.5 267.8,217.0 Q257.1,207.4 241.3,198.2 Z" fill="#fff" stroke="#111" stroke-width="1.15" />
<path d="M241.5,202.0 Q250.7,219.7 272.3,229.8 Q262.9,218.5 248.3,206.8 Z" fill="#fff" stroke="#111" stroke-width="1.15" />
<path d="M246.0,211.0 Q251.6,227.8 270.0,238.0 Q263.2,227.2 251.5,215.7 Z" fill="#fff" stroke="#111" stroke-width="1.15" />
<path d="M249.0,221.5 Q253.9,237.6 271.6,247.0 Q265.3,236.7 254.3,225.9 Z" fill="#fff" stroke="#111" stroke-width="1.15" />
<path d="M253.6,235.0 Q265.0,248.7 286.0,251.6 Q275.6,243.9 260.5,237.4 Z" fill="#fff" stroke="#111" stroke-width="1.15" />
<path d="M182.5,236.3 C182.2,237.6 179.5,240.1 181.0,244.0 C182.5,247.9 188.6,252.8 191.7,260.0 C194.8,267.2 197.0,278.1 199.7,287.0 C202.4,295.9 205.6,307.8 207.7,313.6 C209.8,319.4 211.2,317.6 212.5,322.0 C213.8,326.4 215.2,337.0 215.8,340.0" fill="none" stroke="#111" stroke-width="1.9" />
<path d="M252.0,261.0 C250.5,262.2 245.0,265.5 243.0,268.5 C241.0,271.5 241.2,275.2 240.0,279.0 C238.8,282.8 237.5,287.0 235.5,291.0 C233.5,295.0 230.0,299.0 228.0,303.0 C226.0,307.0 224.2,310.5 223.5,315.0 C222.8,319.5 223.4,325.8 223.5,330.0 C223.6,334.2 223.8,338.3 223.8,340.0" fill="none" stroke="#111" stroke-width="2" />
<path d="M121.4,251.5 L127.0,242.5 L132.3,235.0 L138.8,220.0 L147.5,211.9 L152.0,206.0 L160.0,196.2 L165.0,201.0 L170.0,204.4 L176.0,214.0 L180.0,228.0 L182.5,236.3 L175.0,250.0 L169.0,252.3 L163.0,261.3 L157.0,272.6 L149.6,275.6 L142.0,274.0 L140.6,268.8 L144.3,263.6 L151.0,253.8 L157.0,241.0 L149.6,250.0 L140.6,257.6 L134.5,264.3 L135.3,270.0 L130.8,269.6 L127.0,266.6 L123.3,261.3Z" fill="url(#sclHd)" stroke="none" stroke-width="0" />
<path d="M122.5,249.0 C123.2,247.8 125.4,244.0 127.0,241.5 C128.6,239.0 130.3,237.7 132.3,234.0 C134.3,230.3 136.5,223.0 138.8,219.5 C141.0,216.0 142.9,214.1 146.0,213.0 C149.1,211.9 153.9,212.3 157.4,212.8 C160.9,213.3 165.4,215.5 167.0,216.0 L170.0,220.0 C167.9,219.6 161.2,217.8 157.4,217.5 C153.6,217.2 149.5,217.6 147.0,218.5 C144.5,219.4 144.2,220.1 142.5,223.0 C140.8,225.9 138.9,232.2 137.0,236.0 C135.1,239.8 132.8,242.8 131.0,246.0 C129.2,249.2 126.8,253.5 126.0,255.0Z" fill="#fff" stroke="none" stroke-width="0" />
<path d="M170.0,220.0 C167.9,219.6 161.2,217.8 157.4,217.5 C153.6,217.2 149.5,217.6 147.0,218.5 C144.5,219.4 144.2,220.1 142.5,223.0 C140.8,225.9 138.9,232.2 137.0,236.0 C135.1,239.8 132.8,242.8 131.0,246.0 C129.2,249.2 126.8,253.5 126.0,255.0" fill="none" stroke="#333" stroke-width="0.9" />
<path d="M124.0,251.0 L128.0,253.0" fill="none" stroke="#444" stroke-width="0.8" />
<path d="M127.0,245.0 L131.0,247.5" fill="none" stroke="#444" stroke-width="0.8" />
<path d="M130.0,239.5 L134.0,242.0" fill="none" stroke="#444" stroke-width="0.8" />
<path d="M133.0,234.0 L137.0,236.5" fill="none" stroke="#444" stroke-width="0.8" />
<path d="M136.0,228.0 L140.0,231.0" fill="none" stroke="#444" stroke-width="0.8" />
<path d="M139.0,222.0 L143.0,225.0" fill="none" stroke="#444" stroke-width="0.8" />
<path d="M143.0,215.0 L145.0,220.0" fill="none" stroke="#444" stroke-width="0.8" />
<path d="M148.0,213.0 L149.0,218.5" fill="none" stroke="#444" stroke-width="0.8" />
<path d="M153.0,213.0 L153.5,218.0" fill="none" stroke="#444" stroke-width="0.8" />
<path d="M158.0,213.0 L158.0,217.5" fill="none" stroke="#444" stroke-width="0.8" />
<path d="M163.0,214.5 L162.5,218.5" fill="none" stroke="#444" stroke-width="0.8" />
<path d="M122.0,252.0 C121.2,253.5 122.6,258.6 123.5,261.0 C124.4,263.4 126.1,265.2 127.5,266.5 C128.9,267.8 130.8,268.9 132.0,268.5 C133.2,268.1 134.3,265.9 134.5,264.0 C134.7,262.1 134.1,259.0 133.0,257.0 C131.9,255.0 129.8,252.8 128.0,252.0 C126.2,251.2 122.8,250.5 122.0,252.0Z" fill="#fff" stroke="none" stroke-width="0" />
<path d="M130.5,255.0 C130.0,255.5 127.8,256.7 127.5,258.0 C127.2,259.3 128.2,262.0 129.0,263.0 C129.8,264.0 131.9,263.8 132.5,264.0" fill="none" stroke="#222" stroke-width="1.1" />
<path d="M121.4,251.5 C122.3,250.0 125.2,245.2 127.0,242.5 C128.8,239.8 130.3,238.8 132.3,235.0 C134.3,231.2 137.0,223.5 138.8,220.0 C140.5,216.5 141.5,215.3 143.0,214.0 C144.5,212.7 146.8,212.2 147.5,211.9" fill="none" stroke="#111" stroke-width="1.9" />
<path d="M121.4,251.5 C121.7,253.1 122.4,258.8 123.3,261.3 C124.2,263.8 125.8,265.2 127.0,266.6 C128.2,268.0 129.4,269.0 130.8,269.6 C132.2,270.2 134.6,269.9 135.3,270.0" fill="none" stroke="#111" stroke-width="1.9" />
<path d="M135.3,270.0 C135.2,269.1 133.6,266.4 134.5,264.3 C135.4,262.2 138.1,260.0 140.6,257.6 C143.1,255.2 146.9,252.8 149.6,250.0 C152.3,247.2 155.8,242.5 157.0,241.0" fill="none" stroke="#111" stroke-width="1.7" />
<path d="M157.0,241.0 C156.0,243.1 153.1,250.0 151.0,253.8 C148.9,257.6 146.0,261.1 144.3,263.6 C142.6,266.1 141.0,267.1 140.6,268.8 C140.2,270.5 140.5,272.9 142.0,274.0 C143.5,275.1 147.1,275.8 149.6,275.6 C152.1,275.4 154.8,275.0 157.0,272.6 C159.2,270.2 161.0,264.7 163.0,261.3 C165.0,257.9 167.0,254.5 169.0,252.3 C171.0,250.1 172.8,250.7 175.0,248.0 C177.2,245.3 181.2,238.2 182.5,236.3" fill="none" stroke="#111" stroke-width="1.9" />
<path d="M182.5,236.3 C182.1,234.9 181.1,231.1 180.0,228.0 C178.9,224.9 177.5,221.2 176.0,218.0 C174.5,214.8 171.8,210.5 171.0,209.0" fill="none" stroke="#111" stroke-width="1.6" />
<path d="M147.5,211.9 C148.2,210.9 149.9,208.6 152.0,206.0 C154.1,203.4 157.8,197.1 160.0,196.2 C162.2,195.4 163.3,199.6 165.0,201.0 C166.7,202.4 169.2,203.8 170.0,204.4" fill="none" stroke="#111" stroke-width="1.6" />
<path d="M144.2,227.5 Q147,221 153.9,220.7 Q152,227 144.2,228.6Z" fill="#444" stroke="#111" stroke-width="1.0" />
<path d="M147,226 Q149,223 151.5,222.5" fill="none" stroke="#999" stroke-width="0.6" />
<path d="M150.0,233.0 C151.0,233.6 153.8,235.0 156.0,236.5 C158.2,238.0 161.8,241.1 163.0,242.0" fill="none" stroke="#333" stroke-width="0.9" />
<path d="M146,252 L147,257 L149.5,250.5 M151,246.5 L152.5,252 L154,245 M145,263 L147.5,267 L147.5,261" fill="none" stroke="#111" stroke-width="1.0" />
<path d="M170,207.5 Q185,202 200,203.8 Q190,211 176.3,213.8Z" fill="url(#sclHd)" stroke="#111" stroke-width="1.6" />
<path d="M175,211 Q186,206.5 196,205" fill="none" stroke="#111" stroke-width="1.0" />
<path d="M176,212.5 Q186,208.5 196,205 Q188,210.5 177,213Z" fill="#fff" stroke="none" stroke-width="0" />
<path d="M173.0,215.5 q1.5,-1 3,0 l0,3 q-1.5,1 -3,0Z" fill="#fff" stroke="#555" stroke-width="0.6" />
<path d="M176.2,215.8 q1.5,-1 3,0 l0,3 q-1.5,1 -3,0Z" fill="#fff" stroke="#555" stroke-width="0.6" />
<path d="M179.4,216.1 q1.5,-1 3,0 l0,3 q-1.5,1 -3,0Z" fill="#fff" stroke="#555" stroke-width="0.6" />
<path d="M182.6,216.4 q1.5,-1 3,0 l0,3 q-1.5,1 -3,0Z" fill="#fff" stroke="#555" stroke-width="0.6" />
<path d="M185.8,216.7 q1.5,-1 3,0 l0,3 q-1.5,1 -3,0Z" fill="#fff" stroke="#555" stroke-width="0.6" />
<path d="M189.0,217.0 q1.5,-1 3,0 l0,3 q-1.5,1 -3,0Z" fill="#fff" stroke="#555" stroke-width="0.6" />
<path d="M145,211 L148.8,202.5 L150.5,208 M150.5,204 L159.5,192.5 L156.5,202" fill="none" stroke="#111" stroke-width="1.3" />
<path d="M159.5,194.5 L200.75,143.25 L197,157 L208.5,145.5 L194,179.5 L186,183 L173.25,201 Q167,204 159.5,198.25Z" fill="#fff" stroke="#111" stroke-width="1.6" stroke-linejoin="miter" stroke-miterlimit="10"/>
<path d="M197,157 L182,182 L173.25,201" fill="none" stroke="#111" stroke-width="1.4" />
<path d="M183,183.5 L192,179 L188.5,186.5Z" fill="#fff" stroke="#111" stroke-width="1.1" />
<path d="M138.6,269.3 C139.3,270.7 142.4,274.6 143.0,277.5 C143.6,280.4 143.3,283.9 142.3,286.6 C141.3,289.4 139.4,292.3 137.0,294.0 C134.6,295.7 131.0,297.2 128.0,297.0 C125.0,296.8 121.5,296.3 119.0,292.6 C116.5,288.9 114.0,277.9 113.0,275.0 L117.5,282 L123.5,274.0 C123.0,275.8 120.1,282.0 120.5,285.0 C120.9,288.0 123.7,290.8 125.8,291.8 C127.9,292.8 131.3,292.4 133.3,291.0 C135.3,289.6 137.1,286.9 137.8,283.6 C138.6,280.4 137.8,273.5 137.8,271.5" fill="#fff" stroke="#111" stroke-width="1.6" />
<path d="M247.0,262.7 C249.7,262.1 257.7,260.5 263.4,259.2 C269.1,257.9 275.2,256.6 281.0,255.0 C286.8,253.4 292.6,252.3 298.4,249.9 C304.2,247.5 310.7,243.2 316.0,240.5 C321.3,237.8 322.7,235.6 330.0,233.5 C337.3,231.4 347.5,229.2 360.0,228.0 C372.5,226.8 397.5,226.8 405.0,226.5 L413.0,226.8 C411.3,226.8 406.9,225.8 402.6,226.8 C398.4,227.8 393.8,229.7 387.5,232.8 C381.2,235.9 373.8,241.4 365.0,245.5 C356.2,249.6 345.2,253.2 335.0,257.5 C324.8,261.8 312.1,267.8 304.0,271.0 C295.9,274.2 291.5,275.2 286.7,276.7 C281.9,278.2 278.9,277.1 275.0,280.2 C271.1,283.3 265.3,292.9 263.4,295.4Z" fill="url(#humg)" stroke="none" stroke-width="0" />
<path d="M290.0,165.0 C298.3,167.3 325.0,173.8 340.0,178.8 C355.0,183.8 365.0,188.1 380.0,195.0 C395.0,201.9 415.0,212.1 430.0,220.0 C445.0,227.9 456.6,234.7 470.0,242.5 C483.4,250.3 503.8,262.6 510.5,266.6 L499.0,261.0 L455.0,241.0 L431.0,232.0 L413.0,226.8 L402.6,226.8 L387.5,232.8 L365.0,245.5 L341.0,255.0 L341.0,196.5 L292.5,168.0Z" fill="#b0b0b0" stroke="none" stroke-width="0" />
<path d="M290.0,165.0 C298.3,167.3 325.0,173.8 340.0,178.8 C355.0,183.8 365.0,188.1 380.0,195.0 C395.0,201.9 415.0,212.1 430.0,220.0 C445.0,227.9 456.6,234.7 470.0,242.5 C483.4,250.3 503.8,262.6 510.5,266.6" fill="none" stroke="#111" stroke-width="1.4" />
<path d="M292.5,168.0 C300.4,172.7 327.5,188.3 340.0,196.0 C352.5,203.7 358.3,208.2 367.5,214.0 C376.7,219.8 390.4,228.2 395.0,231.0" fill="none" stroke="#111" stroke-width="1.3" />
<path d="M312.0,181.0 l2.5,-0.5 l1,3.2" fill="none" stroke="#222" stroke-width="1.0" />
<path d="M321.5,187.0 l2.5,-0.5 l1,3.2" fill="none" stroke="#222" stroke-width="1.0" />
<path d="M331.0,193.0 l2.5,-0.5 l1,3.2" fill="none" stroke="#222" stroke-width="1.0" />
<path d="M340.5,199.0 l2.5,-0.5 l1,3.2" fill="none" stroke="#222" stroke-width="1.0" />
<path d="M350.0,205.0 l2.5,-0.5 l1,3.2" fill="none" stroke="#222" stroke-width="1.0" />
<path d="M359.5,211.0 l2.5,-0.5 l1,3.2" fill="none" stroke="#222" stroke-width="1.0" />
<path d="M369.0,217.0 l2.5,-0.5 l1,3.2" fill="none" stroke="#222" stroke-width="1.0" />
<path d="M378.5,223.0 l2.5,-0.5 l1,3.2" fill="none" stroke="#222" stroke-width="1.0" />
<path d="M287.5,167.0 C289.6,168.7 295.0,173.2 300.0,177.0 C305.0,180.8 311.5,185.2 317.5,189.5 C323.5,193.8 332.2,199.2 336.0,203.0 C339.8,206.8 339.7,208.5 340.0,212.0 C340.3,215.5 340.3,220.0 338.0,224.0 C335.7,228.0 332.3,232.0 326.0,236.0 C319.7,240.0 309.3,244.7 300.0,248.0 C290.7,251.3 275.0,254.7 270.0,256.0" fill="#fff" stroke="#111" stroke-width="1.6" />
<path d="M263.4,295.4 C265.3,292.9 271.1,283.3 275.0,280.2 C278.9,277.1 281.9,278.2 286.7,276.7 C291.5,275.2 295.9,274.2 304.0,271.0 C312.1,267.8 324.8,261.8 335.0,257.5 C345.2,253.2 356.2,249.6 365.0,245.5 C373.8,241.4 381.2,235.9 387.5,232.8 C393.8,229.7 398.4,227.8 402.6,226.8 C406.9,225.8 408.3,225.9 413.0,226.8 C417.7,227.7 424.0,229.6 431.0,232.0 C438.0,234.4 443.7,236.2 455.0,241.0 C466.3,245.8 491.7,257.7 499.0,261.0" fill="none" stroke="#111" stroke-width="1.7" />
<path d="M240.0,272.0 C241.2,270.4 243.1,264.8 247.0,262.7 C250.9,260.6 257.7,260.5 263.4,259.2 C269.1,257.9 275.2,256.6 281.0,255.0 C286.8,253.4 292.6,252.3 298.4,249.9 C304.2,247.5 310.7,243.2 316.0,240.5 C321.3,237.8 325.2,235.2 330.0,233.5 C334.8,231.8 342.5,230.6 345.0,230.0" fill="none" stroke="#111" stroke-width="1.7" />
<path d="M268.0,286.0 C269.7,284.5 274.3,279.3 278.0,277.0 C281.7,274.7 285.5,273.8 290.0,272.0 C294.5,270.2 297.5,269.1 305.0,266.0 C312.5,262.9 325.0,257.6 335.0,253.5 C345.0,249.4 356.2,245.6 365.0,241.5 C373.8,237.4 383.8,231.1 387.5,229.0" fill="none" stroke="url(#sclD)" stroke-width="4" />
<path d="M258.0,260.9 C257.8,263.1 256.7,270.2 256.5,274.4 C256.3,278.5 256.9,283.7 257.0,285.6" fill="none" stroke="#444" stroke-width="0.9" />
<path d="M268.4,258.5 C268.1,260.5 267.0,266.7 266.9,270.4 C266.7,274.0 267.3,278.6 267.4,280.2" fill="none" stroke="#444" stroke-width="0.9" />
<path d="M278.7,256.0 C278.5,257.5 277.4,262.2 277.2,265.0 C277.1,267.7 277.6,271.2 277.7,272.5" fill="none" stroke="#444" stroke-width="0.9" />
<path d="M289.1,253.1 C288.8,254.6 287.8,259.2 287.6,261.9 C287.4,264.7 288.0,268.2 288.1,269.4" fill="none" stroke="#444" stroke-width="0.9" />
<path d="M299.5,249.8 C299.2,251.3 298.1,255.9 298.0,258.6 C297.8,261.3 298.4,264.8 298.5,266.0" fill="none" stroke="#444" stroke-width="0.9" />
<path d="M309.8,244.3 C309.6,245.9 308.5,250.8 308.3,253.7 C308.2,256.5 308.7,260.2 308.8,261.6" fill="none" stroke="#333" stroke-width="0.9" />
<path d="M320.2,238.9 C319.9,240.5 318.8,245.6 318.7,248.6 C318.5,251.6 319.1,255.4 319.2,256.8" fill="none" stroke="#333" stroke-width="0.9" />
<path d="M330.5,233.9 C330.3,235.6 329.2,240.8 329.0,243.8 C328.9,246.9 329.5,250.8 329.5,252.1" fill="none" stroke="#333" stroke-width="0.9" />
<path d="M340.9,232.0 C340.7,233.5 339.6,238.2 339.4,241.0 C339.2,243.7 339.8,247.3 339.9,248.5" fill="none" stroke="#333" stroke-width="0.9" />
<path d="M351.3,230.1 C351.0,231.4 349.9,235.7 349.8,238.2 C349.6,240.6 350.2,243.9 350.3,245.0" fill="none" stroke="#333" stroke-width="0.9" />
<path d="M361.6,228.4 C361.4,229.6 360.3,233.3 360.1,235.5 C360.0,237.7 360.6,240.5 360.6,241.6" fill="none" stroke="#333" stroke-width="0.9" />
<path d="M372.0,228.1 C371.8,228.9 370.7,231.6 370.5,233.2 C370.3,234.8 370.9,236.9 371.0,237.6" fill="none" stroke="#333" stroke-width="0.9" />
<path d="M250.0,163.5 C258.3,163.8 285.0,163.9 300.0,165.0 C315.0,166.1 323.3,166.3 340.0,170.0 C356.7,173.7 380.0,180.7 400.0,187.0 C420.0,193.3 437.3,198.2 460.0,208.0 C482.7,217.8 514.3,234.8 536.0,245.5 C557.7,256.2 567.3,258.5 590.0,272.5 C612.7,286.5 658.3,320.0 672.0,329.5" fill="none" stroke="#b4b4b4" stroke-width="3.6" />
<path d="M246.0,157.6 C248.3,157.3 254.8,156.9 260.0,155.8 C265.2,154.7 272.1,151.9 277.5,150.8 C282.9,149.8 282.1,148.8 292.5,149.5 C302.9,150.2 325.4,153.5 340.0,154.8 C354.6,156.2 365.0,156.5 380.0,157.6 C395.0,158.7 420.2,160.3 430.0,161.5 C439.8,162.7 434.0,162.5 439.0,164.5 C444.0,166.5 448.6,169.2 460.0,173.5 C471.4,177.8 491.8,184.2 507.5,190.0 C523.2,195.8 544.2,203.8 554.0,208.0 C563.8,212.2 560.0,211.0 566.0,215.5 C572.0,220.0 580.3,226.8 590.0,235.0 C599.7,243.2 611.3,253.6 624.4,265.0 C637.5,276.4 660.4,296.2 668.4,303.5 C676.4,310.8 671.8,308.1 672.5,309.0" fill="none" stroke="#111" stroke-width="1.6" />
<path d="M290.0,151.4 C298.3,153.3 321.7,159.8 340.0,163.0 C358.3,166.2 383.7,168.2 400.0,170.5 C416.3,172.8 427.6,175.1 437.6,177.0 C447.6,178.9 452.1,179.6 460.0,181.8 C467.9,184.0 470.1,183.6 485.0,190.0 C499.9,196.4 532.1,210.5 549.6,220.0 C567.1,229.5 579.1,239.5 590.0,247.0 C600.9,254.5 606.5,256.9 614.8,265.0 C623.0,273.1 630.8,287.5 639.5,295.3 C648.2,303.1 662.4,309.1 667.0,311.8" fill="none" stroke="#111" stroke-width="1.5" />
<path d="M295.0,164.0 C302.5,164.1 325.0,163.4 340.0,164.5 C355.0,165.6 368.7,167.2 385.0,170.5 C401.3,173.8 425.1,179.8 437.6,184.0 C450.1,188.2 449.6,190.0 460.0,196.0 C470.4,202.0 487.3,213.5 500.0,220.0 C512.7,226.5 527.7,231.5 536.0,235.0 C544.3,238.5 540.6,235.5 549.6,241.0 C558.6,246.5 575.3,258.5 590.0,268.0 C604.7,277.5 624.7,288.9 638.0,298.0 C651.3,307.1 664.5,318.7 669.8,322.8" fill="none" stroke="#111" stroke-width="1.5" />
<path d="M248.8,167.0 C249.8,167.4 250.2,170.0 255.0,169.5 C259.8,169.0 270.0,164.3 277.5,163.9 C285.0,163.5 289.6,165.5 300.0,167.0 C310.4,168.5 323.3,169.0 340.0,172.8 C356.7,176.6 380.0,183.6 400.0,190.0 C420.0,196.4 448.3,206.8 460.0,211.0 C471.7,215.2 457.3,209.2 470.0,215.5 C482.7,221.8 516.0,238.6 536.0,248.6 C556.0,258.6 574.1,266.0 590.0,275.6 C605.9,285.2 617.5,296.8 631.3,306.3 C645.0,315.8 665.6,328.0 672.5,332.4" fill="none" stroke="#111" stroke-width="1.7" />
<path d="M672.5,309.0 C672.9,309.8 674.8,312.2 675.0,314.0 C675.2,315.8 674.2,319.0 674.0,320.0" fill="none" stroke="#111" stroke-width="1.5" />
<path d="M667.0,311.8 C667.9,311.3 671.6,309.5 672.5,309.0" fill="none" stroke="#111" stroke-width="1.2" />
<path d="M669.8,322.8 C670.7,323.8 674.1,326.7 675.0,329.0 C675.9,331.3 675.2,335.2 675.3,336.5" fill="none" stroke="#111" stroke-width="1.5" />
<path d="M672.5,332.4 C672.0,330.8 670.2,324.4 669.8,322.8" fill="none" stroke="#111" stroke-width="1.0" />
<path d="M640,294 Q641,290 645,292 L657,304 Q655,306 652,304Z" fill="none" stroke="#111" stroke-width="1.2" />
<path d="M246,157.6 Q238,160 237.5,166 Q237.5,171 241.3,174.5 Q240.5,168 246,165.5 L248.8,167 Z" fill="#fff" stroke="#111" stroke-width="1.6" />
<path d="M276.0,167.5 C275.0,168.2 271.4,170.2 270.0,172.0 C268.6,173.8 267.8,176.1 267.5,178.0 C267.2,179.9 268.3,182.6 268.5,183.5" fill="none" stroke="#a0a0a0" stroke-width="0.9" />
<path d="M275.0,174.5 C274.7,175.1 273.2,176.9 273.0,178.0 C272.8,179.1 273.8,180.5 274.0,181.0" fill="none" stroke="#a0a0a0" stroke-width="0.8" />
<path d="M277.0,176.0 C277.8,176.7 279.8,179.7 282.0,180.0 C284.2,180.3 287.4,179.1 290.0,178.0 C292.6,176.9 296.2,174.2 297.5,173.5" fill="none" stroke="#a8a8a8" stroke-width="0.8" />
<path d="M485.5,266.6 C489.6,269.2 502.6,277.9 510.0,282.0 C517.4,286.1 526.7,289.8 530.0,291.4" fill="none" stroke="#6a6a6a" stroke-width="0.8" />
<path d="M530.0,291.4 C530.8,289.0 532.5,280.6 535.0,276.8 C537.5,272.9 538.3,269.2 545.0,268.0 C551.7,266.8 559.2,263.3 575.0,269.6 C590.8,275.9 621.0,294.2 640.0,306.0 C659.0,317.8 680.8,334.8 689.0,340.6" fill="none" stroke="#6a6a6a" stroke-width="0.8" />
<path d="M590.0,280.0 C596.7,284.7 615.8,297.9 630.0,308.0 C644.2,318.1 667.5,335.2 675.0,340.6" fill="none" stroke="#777" stroke-width="0.7" />
<path d="M590.0,294.0 C595.0,297.5 609.2,307.2 620.0,315.0 C630.8,322.8 648.8,336.3 654.6,340.6" fill="none" stroke="#777" stroke-width="0.7" />
<path d="M504.5,259.0 C506.2,257.5 510.8,251.6 515.0,250.0 C519.2,248.4 526.5,249.5 530.0,249.3 C533.5,249.1 535.0,248.7 536.0,248.6" fill="none" stroke="#111" stroke-width="1.4" />
<path d="M470.0,269.6 C472.5,268.8 480.0,266.3 485.0,265.0 C490.0,263.7 495.8,261.7 500.0,262.0 C504.2,262.3 508.8,265.8 510.5,266.6" fill="none" stroke="#111" stroke-width="1.3" />
<path d="M425,159 l1.5,6 M428.5,159 l1.5,7 M432,160 l1.5,7 M428,183 l1.5,8 M432,183 l1.5,9 M435.5,184 l1.5,8 M556,208 l2.5,5 M559.5,208 l2.5,6 M537,236 l1.5,6 M540.5,236 l1.5,7" fill="none" stroke="#888" stroke-width="0.6" />
</g>
</defs>
<use href="#dragon"/>
</svg>

<div id="ltb" class="abs"></div>
<svg class="abs" style="left:0;top:120px" width="30" height="370" viewBox="0 120 30 370">
 <g fill="#fff" stroke="none">
  <!-- move -->
  <rect x="11.7" y="138" width="1.5" height="12"/>
  <rect x="6.5" y="143.2" width="12" height="1.5"/>
  <path d="M12.45 133.8 L16.6 139 L8.3 139Z M12.45 154.2 L16.6 149 L8.3 149Z M2.3 144 L7.5 139.8 L7.5 148.2Z M22.6 144 L17.4 139.8 L17.4 148.2Z"/>
  <!-- wand -->
  <path d="M11 167.2 L20.6 177.4" stroke="#fff" stroke-width="3.2" stroke-linecap="round"/>
  <g stroke="#fff" stroke-width="1">
   <path d="M8.6 157.6 L8.6 171 M2.2 164.3 L15 164.3 M4 159.7 L13.2 168.9 M4 168.9 L13.2 159.7"/>
  </g>
  <circle cx="8.6" cy="164.3" r="3"/>
  <!-- lasso -->
  <ellipse cx="12.9" cy="188.6" rx="9.4" ry="6.8" fill="none" stroke="#fff" stroke-width="1.7" transform="rotate(-8 12.9 188.6)"/>
  <circle cx="9.8" cy="196.2" r="2.8"/>
  <path d="M9.8 197 Q10.2 201.5 4.5 203.8" fill="none" stroke="#fff" stroke-width="1.8"/>
  <!-- FX -->
  <circle cx="12.3" cy="218.7" r="10.4"/>
  <text x="12.3" y="223.6" font-family="Liberation Sans" font-size="13" fill="#5f5f5f" text-anchor="middle">FX</text>
  <!-- brush -->
  <g fill="#3ea8f4">
   <path d="M14.5 243.5 L20.8 236.2" stroke="#3ea8f4" stroke-width="3.4" stroke-linecap="round"/>
   <path d="M11.2 245.2 L13.6 247.6" stroke="#3ea8f4" stroke-width="2.6"/>
   <path d="M10.2 246.6 L12.8 249.2 Q9.5 254.2 3.6 253.8 Q3.4 249.5 10.2 246.6Z"/>
  </g>
  <!-- eraser -->
  <path d="M15.7 259 L22.5 266 L12 277.5 L5.5 270.5Z"/>
  <path d="M4.8 271.3 L11.3 278.2 L8 281 L2 275Z"/>
  <!-- smudge (hand) -->
  <path d="M10 284 Q15 281.5 19.5 284 Q22.5 287 21 291 Q19.5 294 16 295 L9.5 303 Q8 304.5 8 302.3 L12 296 Q9 296 8.6 294 L10.6 293.5 L8.2 292 L10.4 291 L7.6 289.5 L10 288.5 L6.8 287.5Z"/>
  <!-- drop -->
  <path d="M12.8 308.8 Q19.8 318.5 19.8 322.3 Q19.8 328.8 12.8 328.8 Q5.8 328.8 5.8 322.3 Q5.8 318.5 12.8 308.8Z"/>
  <!-- bucket -->
  <path d="M12.7 334 L23.2 344.6 L14.6 353.6 L4.5 343.4Z"/>
  <path d="M1.8 341.5 L5.6 338.5 L4.5 343.4 L3 341.8 L2.6 353.6 L1.8 353.6Z"/>
  <!-- T -->
  <text x="12.5" y="378.8" font-family="Liberation Serif" font-size="28" fill="#fff" text-anchor="middle">T</text>
  <!-- frame divider -->
  <g fill="none" stroke="#fff" stroke-width="0.9">
   <rect x="2.8" y="384" width="19.2" height="19.5"/>
   <path d="M2.8 394.8 L22 392.2 M12.8 393.5 L12.8 403.5"/>
  </g>
  <!-- dropper -->
  <path d="M18.5 408.5 Q22.5 409.5 22 413 L19.5 415.6 L15.6 411.7Z"/>
  <path d="M13.6 411 L20.2 417.6 L19 418.6 L12.4 412Z"/>
  <path d="M14.4 414.2 L17.4 417.2 L6 428.4 Q4.2 429.8 3 428.6 Q2.2 427.3 3.4 425.6Z"/>
  <!-- frame -->
  <g fill="none" stroke="#fff" stroke-width="0.9">
   <rect x="2.5" y="433.5" width="20.3" height="20.4"/>
   <rect x="4.7" y="435.7" width="15.9" height="16"/>
  </g>
  <!-- gear -->
  <g transform="translate(12.5 468.8)">
   <circle r="7.2"/>
   <g id="tooth"><rect x="-2" y="-10.3" width="4" height="4"/></g>
   <use href="#tooth" transform="rotate(45)"/>
   <use href="#tooth" transform="rotate(90)"/>
   <use href="#tooth" transform="rotate(135)"/>
   <use href="#tooth" transform="rotate(180)"/>
   <use href="#tooth" transform="rotate(225)"/>
   <use href="#tooth" transform="rotate(270)"/>
   <use href="#tooth" transform="rotate(315)"/>
   <circle r="2" fill="#5f5f5f"/>
  </g>
 </g>
</svg>

<div id="panel" class="abs"></div>
<div id="layertitle" class="abs">Layer</div>
<div id="thumb" class="abs"><svg width="173" height="98" viewBox="107 137 594 336" style="position:absolute;left:0;top:0;filter:blur(0.3px)"><use href="#dragon"/></svg></div>
<div id="thumbstrip" class="abs"></div>
<div id="ttb" class="abs"></div>
<svg class="abs" style="left:358px;top:468px" width="142" height="28" viewBox="358 468 142 28">
 <g fill="#fff">
  <rect x="366" y="481.4" width="13" height="1.5"/>
  <rect x="371.75" y="475.6" width="1.5" height="13"/>
  <rect x="397" y="477" width="12" height="13.5" fill="#9a9a9a"/>
  <rect x="395.5" y="475.5" width="12" height="13.5"/>
  <rect x="397.5" y="480.4" width="5.5" height="0.9" fill="#222"/>
  <path d="M421 477.5 L425 477.5 L426.5 476 L431.5 476 L433 477.5 L436.7 477.5 L436.7 488.2 L421 488.2Z"/>
  <circle cx="434.7" cy="478.6" r="0.5" fill="#000"/>
  <circle cx="429" cy="482.8" r="3.3" fill="#000"/>
  <circle cx="429" cy="482.8" r="1.9"/>
  <path d="M448.7 477 L455.2 482.6 L448.7 488.2Z"/>
  <path d="M465.2 477 L458.7 482.6 L465.2 488.2Z"/>
  <rect x="456.3" y="478.5" width="1.3" height="9.7"/>
  <path d="M452.5 477.5 Q456.5 472 461 475.5" fill="none" stroke="#fff" stroke-width="1.1"/>
  <path d="M459.5 473.5 L463 474.6 L461 477.6Z"/>
  <path d="M478 474.5 L491 474.5 L484.5 480.3Z"/>
  <path d="M478 489.2 L491 489.2 L484.5 483.4Z"/>
  <rect x="479.5" y="481.3" width="8" height="1.2"/>
  <path d="M489.5 477.5 Q495 481.5 491.5 487" fill="none" stroke="#fff" stroke-width="1.1"/>
  <path d="M489.5 485.5 L492.5 488.8 L493.8 484.8Z"/>
 </g>
</svg>
<div id="llist" class="abs"></div>
<!-- selection row -->
<div class="abs" style="left:524px;top:345px;width:74px;height:56px;border:1px solid #555;background-color:#fbe9e9;background-image:linear-gradient(45deg,#f4b7b7 25%,transparent 25%,transparent 75%,#f4b7b7 75%),linear-gradient(45deg,#f4b7b7 25%,transparent 25%,transparent 75%,#f4b7b7 75%);background-size:6px 6px;background-position:0 0,3px 3px"></div>
<div class="abs" style="left:607px;top:366.5px;width:21px;height:14px;border:1px dashed #222"></div>
<div class="abs t" style="left:637.5px;top:345.5px;font-size:14px">Selection Layer</div>
<div class="abs t" style="left:660px;top:384px;font-size:13.4px">No Selection</div>
<div class="abs" style="left:519px;top:402.5px;width:242px;height:1px;background:#b9b9b9"></div>
<!-- layer 1 row -->
<div class="abs" style="left:519px;top:403.5px;width:242px;height:60.5px;background:#d5e1f3"></div>
<div class="abs" style="left:521.7px;top:404.5px;width:78.5px;height:59.5px;border:2.6px solid #2d74d9;background-color:#fdfdfd;background-image:linear-gradient(45deg,#e6e6e6 25%,transparent 25%,transparent 75%,#e6e6e6 75%),linear-gradient(45deg,#e6e6e6 25%,transparent 25%,transparent 75%,#e6e6e6 75%);background-size:6px 6px;background-position:0 0,3px 3px;overflow:hidden"><svg width="73" height="54" viewBox="107 137 594 336" preserveAspectRatio="none" style="position:absolute;left:0;top:0;filter:blur(0.25px)"><use href="#dragon"/></svg></div>
<svg class="abs" style="left:605px;top:424px" width="24" height="20" viewBox="605 424 24 20">
 <path d="M606.5 434.3 Q617 423.5 627.5 434.3 Q617 445 606.5 434.3Z" fill="#8f8f8f"/>
 <circle cx="617" cy="434.3" r="4.6" fill="#d5e1f3"/>
 <circle cx="617" cy="434.3" r="3.4" fill="#8f8f8f"/>
</svg>
<div class="abs t" style="left:637.5px;top:406.5px;font-size:15.5px">1</div>
<div class="abs t" style="left:680px;top:425px;font-size:14px">100%</div>
<div class="abs t" style="left:676px;top:445px;font-size:13.6px">Normal</div>
<div class="abs" style="left:519px;top:464px;width:242px;height:1px;background:#c9c9c9"></div>
<div class="abs t" style="left:525.3px;top:473.6px;font-size:12.2px">Background</div>
<div class="abs" style="left:690.8px;top:470px;width:20px;height:19.7px;border:2.2px solid #2d74d9;background:#fff"></div>
<div class="abs" style="left:713px;top:470px;width:20px;height:19.7px;border:1px solid #333;background-color:#fdfdfd;background-image:linear-gradient(45deg,#dcdcdc 25%,transparent 25%,transparent 75%,#dcdcdc 75%),linear-gradient(45deg,#dcdcdc 25%,transparent 25%,transparent 75%,#dcdcdc 75%);background-size:8px 8px;background-position:0 0,4px 4px"></div>
<div class="abs" style="left:734.5px;top:470px;width:20px;height:19.7px;border:1px solid #222;background-color:#555;background-image:linear-gradient(45deg,#3a3a3a 25%,transparent 25%,transparent 75%,#3a3a3a 75%),linear-gradient(45deg,#3a3a3a 25%,transparent 25%,transparent 75%,#3a3a3a 75%);background-size:8px 8px;background-position:0 0,4px 4px"></div>
<!-- right toolbar -->
<div id="rtb" class="abs"></div>
<svg class="abs" style="left:764px;top:233px" width="33" height="263" viewBox="764 233 33 263">
 <defs>
  <pattern id="chk" x="771" y="240" width="6" height="6" patternUnits="userSpaceOnUse">
   <rect width="6" height="6" fill="#fff"/><rect width="3" height="3" fill="#777"/><rect x="3" y="3" width="3" height="3" fill="#777"/>
  </pattern>
 </defs>
 <rect x="771" y="240" width="19" height="19" fill="url(#chk)"/>
 <g fill="#fff">
  <!-- swap -->
  <rect x="772" y="273" width="8" height="8"/>
  <circle cx="776" cy="277" r="2" fill="#000"/>
  <rect x="781.5" y="283.5" width="8" height="8" fill="none" stroke="#fff" stroke-width="1"/>
  <circle cx="785.5" cy="287.5" r="1.8"/>
  <path d="M782 274.5 Q786 274.5 786 279" fill="none" stroke="#fff" stroke-width="1.2"/>
  <path d="M783.8 278.5 L788.2 278.5 L786 281.2Z"/>
  <path d="M779.5 291 Q775.5 291 775.5 286.5" fill="none" stroke="#fff" stroke-width="1.2"/>
  <path d="M773.3 287 L777.7 287 L775.5 284.3Z"/>
  <!-- move -->
  <path d="M780.5 305 L784 309 L781.4 309 L781.4 314 L786.4 314 L786.4 311.4 L790.4 315 L786.4 318.6 L786.4 316 L781.4 316 L781.4 321 L784 321 L780.5 325 L777 321 L779.6 321 L779.6 316 L774.6 316 L774.6 318.6 L770.6 315 L774.6 311.4 L774.6 314 L779.6 314 L779.6 309 L777 309Z"/>
  <!-- flip h -->
  <path d="M771 342 L778.5 349.5 L771 357Z"/>
  <path d="M790 342 L782.5 349.5 L790 357Z"/>
  <rect x="779.8" y="342" width="1.4" height="15"/>
  <path d="M774.5 341 Q780.5 335 786.5 341" fill="none" stroke="#fff" stroke-width="1.2"/>
  <path d="M784.5 341.5 L788.5 341.5 L786.5 338.5Z"/>
  <!-- flip v -->
  <path d="M771.5 371 L786.5 371 L779 378.5Z"/>
  <path d="M771.5 390 L786.5 390 L779 382.5Z"/>
  <rect x="771.5" y="379.8" width="15" height="1.4"/>
  <path d="M787.5 374.5 Q793.5 380.5 787.5 386.5" fill="none" stroke="#fff" stroke-width="1.2"/>
  <!-- merge down -->
  <path d="M777.5 403 L783.5 403 L783.5 409 L787 409 L780.5 415.5 L774 409 L777.5 409Z" fill="#ddd"/>
  <rect x="771" y="418" width="19" height="1.4" fill="#ddd"/>
  <rect x="771" y="422" width="19" height="1.4" fill="#ddd"/>
  <!-- trash -->
  <g fill="none" stroke="#d0d0d0" stroke-width="1.1">
   <path d="M772 441.5 L789 441.5 M777.5 441.5 L777.5 439 L783.5 439 L783.5 441.5"/>
   <path d="M773.5 443 L775 457 L786 457 L787.5 443"/>
   <path d="M778 445.5 L778 454.5 M780.5 445.5 L780.5 454.5 M783 445.5 L783 454.5"/>
  </g>
  <circle cx="780.5" cy="471.5" r="2"/>
  <circle cx="780.5" cy="479" r="2"/>
  <circle cx="780.5" cy="486.5" r="2"/>
 </g>
</svg>
<!-- buttons -->
<div class="abs" style="left:519px;top:500px;width:76px;height:27px;background:#000;border-radius:3px"></div>
<div class="abs" style="left:597.3px;top:500px;width:75.7px;height:27px;background:#000;border-radius:3px"></div>
<svg class="abs" style="left:519px;top:500px" width="154" height="27" viewBox="519 500 154 27">
 <path d="M560.5 503 L556 503 Q553.5 503 553.5 505.5 L553.5 510.5" fill="none" stroke="#9a9a9a" stroke-width="1.5"/>
 <path d="M550.5 509 L556.5 509 L553.5 513Z" fill="#9a9a9a"/>
 <text x="556.5" y="523.5" font-family="Liberation Sans" font-size="8" fill="#8a8a8a" text-anchor="middle">Clipping</text>
 <path d="M631 507 L631 505 Q634.5 501 638 505 L638 507" fill="none" stroke="#fff" stroke-width="1.3"/>
 <rect x="629.5" y="507" width="10" height="7.5" rx="0.8" fill="#fff"/>
 <text x="634.5" y="513.5" font-family="Liberation Serif" font-style="italic" font-size="7.5" fill="#000" text-anchor="middle">α</text>
 <text x="634.5" y="523" font-family="Liberation Sans" font-size="6.8" fill="#eee" text-anchor="middle">Alpha Lock</text>
</svg>
<div class="abs" style="left:677.5px;top:500px;width:101.5px;height:26.7px;background:#fff"></div>
<div class="abs t" style="left:685.5px;top:504.5px;font-size:15px">Normal</div>
<div class="abs" style="left:779px;top:500px;width:16.7px;height:26.7px;background:#bdbdbd"></div>
<svg class="abs" style="left:779px;top:500px" width="17" height="27"><path d="M3.5 16.5 L13.5 16.5 L8.5 10.5Z" fill="#f2f2f2"/></svg>
<!-- opacity row -->
<div class="abs" style="left:519.5px;top:532px;color:#fff;font-family:'Liberation Serif';font-style:italic;font-size:17px">α</div>
<div class="abs" style="left:535px;top:535.5px;color:#f0f0f0;font-size:11px">100%</div>
<svg class="abs" style="left:560px;top:525px" width="240" height="32" viewBox="560 525 240 32">
 <defs>
  <linearGradient id="sg" x1="0" x2="1">
   <stop offset="0" stop-color="#f2f2f2"/><stop offset="0.3" stop-color="#d6d6d6"/><stop offset="0.5" stop-color="#9a9a9a"/><stop offset="0.7" stop-color="#3c3c3c"/><stop offset="0.9" stop-color="#111"/><stop offset="1" stop-color="#000"/>
  </linearGradient>
 </defs>
 <circle cx="577.5" cy="541.5" r="9.6" fill="#8a8a8a"/>
 <circle cx="577.5" cy="541.5" r="8.8" fill="#111"/>
 <rect x="572.5" y="540.8" width="10" height="1.4" fill="#fff"/>
 <pattern id="slchk" x="597.5" y="537.5" width="6" height="6" patternUnits="userSpaceOnUse"><rect x="0" y="0" width="3" height="3" fill="#000" opacity="0.12"/><rect x="3" y="3" width="3" height="3" fill="#000" opacity="0.12"/></pattern>
 <rect x="597.5" y="537.5" width="162" height="7.6" rx="3.8" fill="url(#sg)"/>
 <rect x="600" y="537.5" width="120" height="7.6" fill="url(#slchk)"/>
 <circle cx="759" cy="541.6" r="9.3" fill="#fff"/>
 <circle cx="785.5" cy="541.6" r="9.6" fill="#8a8a8a"/>
 <circle cx="785.5" cy="541.6" r="8.8" fill="#111"/>
 <rect x="780.5" y="540.9" width="10" height="1.4" fill="#fff"/>
 <rect x="784.8" y="536.6" width="1.4" height="10" fill="#fff"/>
</svg>
<!-- red circle -->
<svg class="abs" style="left:340px;top:435px" width="75" height="75" viewBox="340 435 75 75">
 <g fill="none" stroke="#e42b3d" stroke-width="1.5" stroke-linecap="round">
  <path d="M375.4,458.4 C381,458 389,462 393.8,472.6 C396,480 395,486 392.7,488.8 C390,496 386,500 383,500.8 C377,503 371,503 366.7,501.9 C360,499 356,495 354.8,492 C351,485 351,479 352.6,474.7 C354,467 356,462 359.1,458.4 C362,454 366,451 370,449.2 C375,447 379,447 383,447.6 C389,449 393,452 395,454.1 C399,459 401,465 401.4,470.4 C402,478 401,484 399.3,488.8 C397,495 392,500 388.4,501.9 C384,504 380,504 377.6,504"/>
  <path d="M362,455 C368,452 373,452 378,452.5"/>
  <path d="M366,453.5 C360,458 356,466 355.5,474 C355,484 358,493 364,498" stroke-width="1.1"/>
 </g>
</svg>

<div id="btb" class="abs"></div>
<div class="abs" style="left:0;top:555.5px;width:800px;height:1px;background:#8a8a8a"></div>
<svg class="abs" style="left:0;top:556px" width="800" height="43" viewBox="0 556 800 43">
 <g fill="#fff">
  <!-- swap brush/eraser -->
  <path d="M71.2 569.2 L67 573.4" stroke="#fff" stroke-width="2.8" stroke-linecap="round"/>
  <path d="M66.2 574.2 L65.2 575.2" stroke="#fff" stroke-width="2.4"/>
  <path d="M64.6 574.2 L66.4 576 Q64.5 578.6 62.4 578 Q62 576 64.6 574.2Z"/>
  <path d="M77 578.8 L82 583.6 L76.6 589 L71.8 584.2Z"/>
  <path d="M71.2 585 L75.8 589.6" stroke="#737373" stroke-width="0.9"/>
  <path d="M74.8 571.8 L78.6 571.8 Q80.6 572.2 80 574.4" fill="none" stroke="#fff" stroke-width="1.1"/>
  <path d="M78 573.6 L81.6 573.6 L79.6 576.2Z"/>
  <path d="M69.4 585.6 L65 585.6 Q62.8 585.2 63.2 583" fill="none" stroke="#fff" stroke-width="1.1"/>
  <path d="M61.4 583.6 L65 583.6 L63.2 581Z"/>
  <!-- brush size -->
  <circle cx="165" cy="578.4" r="14" fill="#000" stroke="#c8c8c8" stroke-width="0.9"/>
  <text x="169" y="588" font-family="Liberation Sans" font-weight="bold" font-size="10" fill="#fff" stroke="#000" stroke-width="0.4" text-anchor="middle">3.5</text>
  <!-- color -->
  <rect x="246.5" y="565.5" width="25.5" height="25.5" fill="#000" stroke="#9b9b9b" stroke-width="1"/>
  <!-- down arrow -->
  <path d="M353.2 568 L353.2 589 M345 580.5 L353.2 588.8 L361.4 580.5" fill="none" stroke="#fff" stroke-width="1.2"/>
  <!-- undo -->
  <path d="M439.5 575.5 L449 575.5 Q455.5 575.5 455.5 580.8 Q455.5 586 449 586 L444 586 M443 571.8 L439.2 575.5 L443 579.2" fill="none" stroke="#9f9f9f" stroke-width="1.1"/>
  <!-- redo -->
  <path d="M549 575.5 L539.5 575.5 Q533 575.5 533 580.8 Q533 586 539.5 586 L544.5 586 M545.5 571.8 L549.3 575.5 L545.5 579.2" fill="none" stroke="#9f9f9f" stroke-width="1.1"/>
  <!-- layers -->
  <rect x="629" y="572" width="14" height="16" fill="#fff" stroke="#555" stroke-width="0.5"/>
  <rect x="626.5" y="569.5" width="14" height="15" fill="#fff" stroke="#555" stroke-width="0.5"/>
  <rect x="624" y="567" width="14" height="14.5" fill="#fff" stroke="#555" stroke-width="0.5"/>
  <text x="631" y="578.5" font-family="Liberation Sans" font-weight="bold" font-size="8.5" fill="#222" text-anchor="middle">1</text>
  <!-- back -->
  <path d="M738 578.3 L717.8 578.3 M726.5 569.6 L717.8 578.3 L726.5 587" fill="none" stroke="#fff" stroke-width="1.2"/>
 </g>
</svg>

</body></html>
